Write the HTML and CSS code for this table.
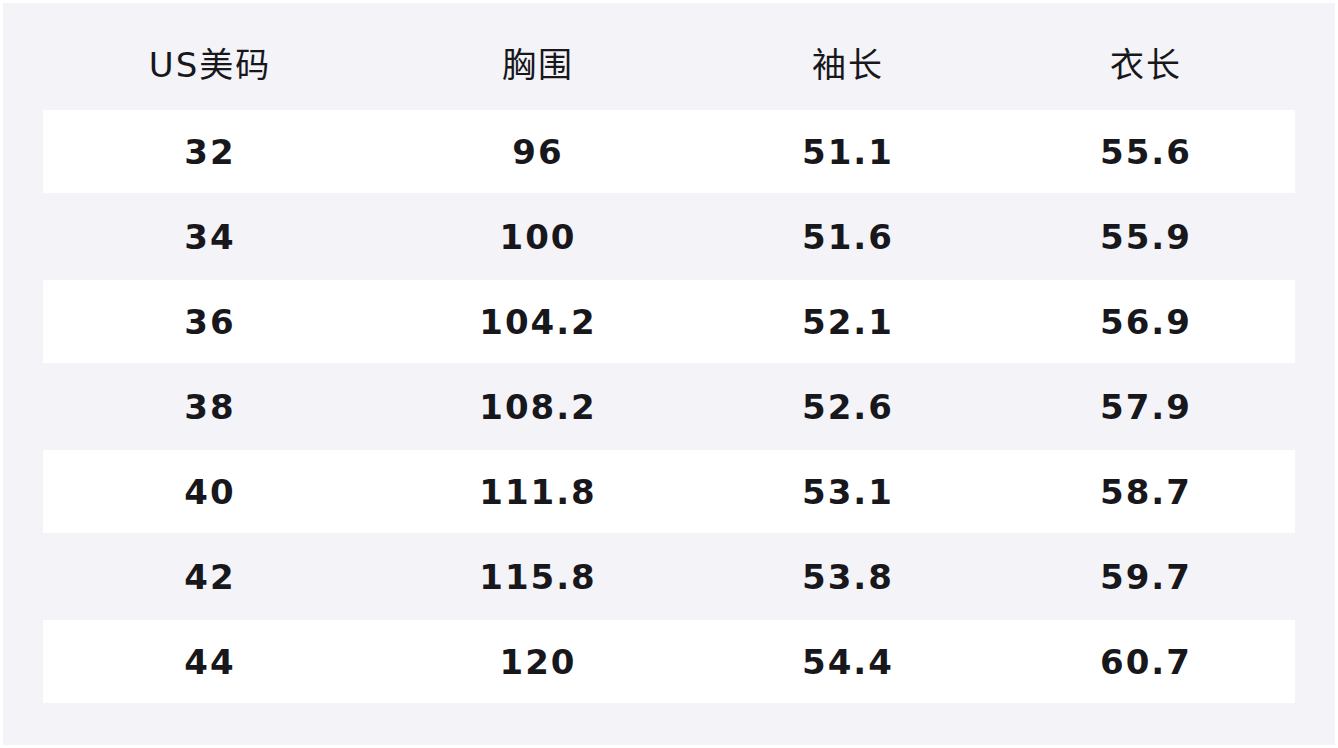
FILE: index.html
```html
<!DOCTYPE html>
<html lang="zh">
<head>
<meta charset="utf-8">
<link rel="stylesheet" href="styles.css">
</head>
<body>
<div class="panel">
  <div class="size-table">
    <div class="row head">
      <div class="cell">US美码</div><div class="cell">胸围</div><div class="cell">袖长</div><div class="cell">衣长</div>
    </div>
    <div class="row light"><div class="cell">32</div><div class="cell">96</div><div class="cell">51.1</div><div class="cell">55.6</div></div>
    <div class="row shade"><div class="cell">34</div><div class="cell">100</div><div class="cell">51.6</div><div class="cell">55.9</div></div>
    <div class="row light"><div class="cell">36</div><div class="cell">104.2</div><div class="cell">52.1</div><div class="cell">56.9</div></div>
    <div class="row shade"><div class="cell">38</div><div class="cell">108.2</div><div class="cell">52.6</div><div class="cell">57.9</div></div>
    <div class="row light"><div class="cell">40</div><div class="cell">111.8</div><div class="cell">53.1</div><div class="cell">58.7</div></div>
    <div class="row shade"><div class="cell">42</div><div class="cell">115.8</div><div class="cell">53.8</div><div class="cell">59.7</div></div>
    <div class="row light"><div class="cell">44</div><div class="cell">120</div><div class="cell">54.4</div><div class="cell">60.7</div></div>
  </div>
</div>
</body>
</html>
```

FILE: styles.css
```css
html, body {
  margin: 0;
  padding: 0;
  background: #ffffff;
}
body {
  padding: 3px;
  font-family: "DejaVu Sans", "Noto Sans CJK SC", sans-serif;
  color: #17171c;
}
.panel {
  background: #f3f3f8;
  height: 742px;
  box-sizing: border-box;
  padding: 0 40px 42px;
}
.size-table {
  display: flex;
  flex-direction: column;
}
.row {
  display: grid;
  grid-template-columns: 330px 326px 294px 302px;
  align-items: center;
}
.cell {
  text-align: center;
  white-space: nowrap;
  padding-left: 4px;
}
.head {
  height: 107px;
  box-sizing: border-box;
  padding-top: 12px;
  font-size: 34px;
  letter-spacing: 2px;
  font-weight: normal;
}
.light, .shade {
  font-size: 34px;
  font-weight: bold;
  letter-spacing: 2px;
}
.light {
  height: 83px;
  background: #ffffff;
}
.shade {
  height: 87px;
}
```
